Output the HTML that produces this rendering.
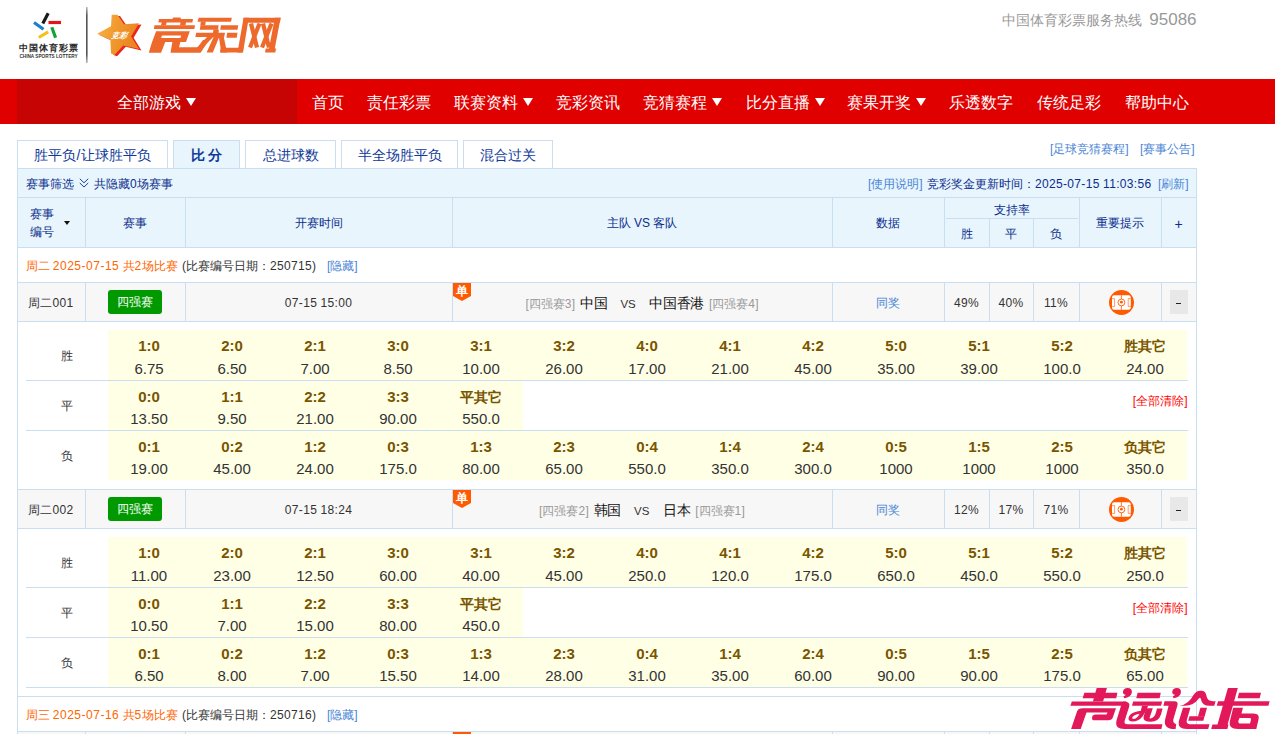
<!DOCTYPE html><html><head><meta charset="utf-8"><style>
html,body{margin:0;padding:0;} body{width:1275px;height:734px;overflow:hidden;position:relative;background:#fff;font-family:"Liberation Sans", sans-serif;color:#333;}
div{box-sizing:border-box;} body{font-weight:500}
</style></head><body>
<svg style="position:absolute;left:0;top:0" width="300" height="79" viewBox="0 0 300 79">
<defs><linearGradient id="sg" x1="0" y1="0" x2="1" y2="0.3"><stop offset="0" stop-color="#f7b64a"/><stop offset="0.5" stop-color="#f19a2e"/><stop offset="1" stop-color="#ec8422"/></linearGradient>
<linearGradient id="dv" x1="0" y1="0" x2="0" y2="1"><stop offset="0" stop-color="#bbb"/><stop offset="0.15" stop-color="#555"/><stop offset="0.85" stop-color="#555"/><stop offset="1" stop-color="#bbb"/></linearGradient></defs>
<g stroke-linecap="butt" stroke-width="3.2">
<line x1="42.8" y1="23.5" x2="48.2" y2="13.3" stroke="#1a1a1a"/>
<line x1="48.5" y1="22.5" x2="61" y2="22.5" stroke="#e3141b"/>
<line x1="34" y1="22.5" x2="43.5" y2="29.3" stroke="#1a7fd0"/>
<line x1="38.8" y1="37.5" x2="48.2" y2="31.8" stroke="#f4c21a"/>
<line x1="51.8" y1="27.3" x2="55.6" y2="37.8" stroke="#16a03c"/>
</g>
<rect x="86" y="7" width="1.6" height="56" fill="url(#dv)"/>
<polygon transform="translate(2.5,1.3)" points="111.7,14.8 117.5,14.8 124,24.3 139,23.3 131.1,36.5 139,49.1 123.3,45.4 114.5,54.9 111,53.6 110.4,40 97.1,33.8 111,26.3" fill="#e8261a"/>
<polygon points="111.7,14.8 117.5,14.8 124,24.3 139,23.3 131.1,36.5 139,49.1 123.3,45.4 114.5,54.9 111,53.6 110.4,40 97.1,33.8 111,26.3" fill="url(#sg)"/>
<text x="119.5" y="37.6" font-size="7.8" fill="#fff" font-style="italic" font-weight="bold" text-anchor="middle" transform="translate(119.5,35) skewX(-12) translate(-119.5,-35)">竞彩</text>
<g fill="#ee692c">
<polygon points="159,19 193,19 192.4,22.4 158.4,22.4"/>
<polygon points="173,17.6 180.5,17.6 181,19.2 172.5,19.2"/>
<polygon points="161.8,22 166.5,22 166,25.5 161,25.5"/>
<polygon points="180.6,22 186,22 185.5,25.5 180,25.5"/>
<polygon points="154.5,25.2 195,25.2 194.3,28.9 153.8,28.9"/>
<path fill-rule="evenodd" d="M156.1,31.3 L189.8,31.3 L186,42.1 L152.1,42.1 Z M162,35.5 L181.3,35.5 L180.4,38.1 L161.1,38.1 Z"/>
<polygon points="152.1,41.8 165.3,41.8 161.1,52.7 148.8,52.7"/>
<polygon points="172.4,41.8 180.4,41.8 179,47.3 198,47.3 203,40 209,40 200.6,52.7 170.5,52.7"/>
<polygon points="198.7,17.8 231.8,17.8 231,21.8 197.5,21.8"/>
<polygon points="200.8,21.5 205.7,21.5 205.2,25.5 200.3,25.5"/>
<polygon points="200.5,25.2 218.6,25.2 218,29.8 199.8,29.8"/>
<polygon points="220.9,25.2 238.2,25.2 237.6,29.8 220.2,29.8"/>
<polygon points="213.4,29.5 218.9,29.5 218.5,33 213,33"/>
<polygon points="196.2,32.8 225,32.8 224.2,37.1 195.4,37.1"/>
<polygon points="227.2,32.8 237.5,32.8 236.7,37.7 226.4,37.7"/>
<polygon points="213.6,37 219.2,37 212.8,52.4 206.6,52.4"/>
<polygon points="207,37 213.2,37 202.4,48 196.6,48"/>
<polygon points="218.9,37 223.8,37 227,52.4 221.3,52.4"/>
<polygon points="220.7,47.8 243.4,47.8 242.6,52.4 219.9,52.4"/>
<polygon points="243.6,17.8 280.6,17.8 280,22.7 243,22.7"/>
<polygon points="243.6,17.8 248.8,17.8 243,52.4 237.5,52.4"/>
<polygon points="274.8,17.8 280.6,17.8 274.8,48.4 276,48.4 275.3,52.4 265,52.4 265.7,48.4 269,48.4"/>
</g>
<g stroke="#ee692c" stroke-width="4.2" stroke-linecap="butt">
<line x1="251" y1="23.5" x2="257" y2="47.5"/>
<line x1="259.5" y1="23.5" x2="250" y2="47.5"/>
<line x1="263" y1="23.5" x2="269" y2="47.5"/>
<line x1="271.5" y1="23.5" x2="262" y2="47.5"/>
</g>
</svg>
<div style="position:absolute;left:17px;top:43px;width:62px;height:10px;line-height:10px;text-align:center;white-space:nowrap;font-size:9px;font-weight:bold;color:#2a2a2a;letter-spacing:1px;text-indent:1px;">中国体育彩票</div>
<div style="position:absolute;left:17.5px;top:54px;width:62px;height:6px;line-height:6px;text-align:center;white-space:nowrap;font-size:4.7px;font-weight:bold;color:#333;">CHINA SPORTS LOTTERY</div>
<div style="position:absolute;left:1001.5px;top:9px;height:22px;line-height:22px;white-space:nowrap;color:#999;font-size:14px">中国体育彩票服务热线&nbsp;&nbsp;<span style="font-size:17px">95086</span></div>
<div style="position:absolute;left:0px;top:79px;width:1275px;height:45px;background:#e00000"></div>
<div style="position:absolute;left:17px;top:79px;width:280px;height:45px;background:#c70404"></div>
<div style="position:absolute;left:117px;top:80px;width:70px;height:45px;line-height:45px;text-align:left;white-space:nowrap;color:#fff;font-size:16px;">全部游戏</div>
<div style="position:absolute;left:186px;top:98px;width:0;height:0;border-left:5.0px solid transparent;border-right:5.0px solid transparent;border-top:8px solid #fff"></div>
<div style="position:absolute;left:312px;top:80px;width:70px;height:45px;line-height:45px;text-align:left;white-space:nowrap;color:#fff;font-size:16px;">首页</div>
<div style="position:absolute;left:367px;top:80px;width:70px;height:45px;line-height:45px;text-align:left;white-space:nowrap;color:#fff;font-size:16px;">责任彩票</div>
<div style="position:absolute;left:454px;top:80px;width:70px;height:45px;line-height:45px;text-align:left;white-space:nowrap;color:#fff;font-size:16px;">联赛资料</div>
<div style="position:absolute;left:523px;top:98px;width:0;height:0;border-left:5.0px solid transparent;border-right:5.0px solid transparent;border-top:8px solid #fff"></div>
<div style="position:absolute;left:556px;top:80px;width:70px;height:45px;line-height:45px;text-align:left;white-space:nowrap;color:#fff;font-size:16px;">竞彩资讯</div>
<div style="position:absolute;left:643px;top:80px;width:70px;height:45px;line-height:45px;text-align:left;white-space:nowrap;color:#fff;font-size:16px;">竞猜赛程</div>
<div style="position:absolute;left:712px;top:98px;width:0;height:0;border-left:5.0px solid transparent;border-right:5.0px solid transparent;border-top:8px solid #fff"></div>
<div style="position:absolute;left:746px;top:80px;width:70px;height:45px;line-height:45px;text-align:left;white-space:nowrap;color:#fff;font-size:16px;">比分直播</div>
<div style="position:absolute;left:815px;top:98px;width:0;height:0;border-left:5.0px solid transparent;border-right:5.0px solid transparent;border-top:8px solid #fff"></div>
<div style="position:absolute;left:847px;top:80px;width:70px;height:45px;line-height:45px;text-align:left;white-space:nowrap;color:#fff;font-size:16px;">赛果开奖</div>
<div style="position:absolute;left:916px;top:98px;width:0;height:0;border-left:5.0px solid transparent;border-right:5.0px solid transparent;border-top:8px solid #fff"></div>
<div style="position:absolute;left:949px;top:80px;width:70px;height:45px;line-height:45px;text-align:left;white-space:nowrap;color:#fff;font-size:16px;">乐透数字</div>
<div style="position:absolute;left:1037px;top:80px;width:70px;height:45px;line-height:45px;text-align:left;white-space:nowrap;color:#fff;font-size:16px;">传统足彩</div>
<div style="position:absolute;left:1125px;top:80px;width:70px;height:45px;line-height:45px;text-align:left;white-space:nowrap;color:#fff;font-size:16px;">帮助中心</div>
<div style="position:absolute;left:17px;top:140px;width:151px;height:29px;border:1px solid #c9def0;background:#fff;text-align:center;line-height:28px;font-size:14px;color:#0f3a9a;">胜平负<span style="margin:0 0.8px">/</span>让球胜平负</div>
<div style="position:absolute;left:173px;top:140px;width:67px;height:29px;border:1px solid #c9def0;background:#e8f5fd;text-align:center;line-height:28px;font-size:14px;color:#0f3a9a;font-weight:bold;">比 分</div>
<div style="position:absolute;left:245px;top:140px;width:91px;height:29px;border:1px solid #c9def0;background:#fff;text-align:center;line-height:28px;font-size:14px;color:#0f3a9a;">总进球数</div>
<div style="position:absolute;left:341px;top:140px;width:117px;height:29px;border:1px solid #c9def0;background:#fff;text-align:center;line-height:28px;font-size:14px;color:#0f3a9a;">半全场胜平负</div>
<div style="position:absolute;left:463px;top:140px;width:90px;height:29px;border:1px solid #c9def0;background:#fff;text-align:center;line-height:28px;font-size:14px;color:#0f3a9a;">混合过关</div>
<div style="position:absolute;left:1050px;top:139px;width:90px;height:20px;line-height:20px;text-align:left;white-space:nowrap;font-size:12px;color:#4a85d6;">[足球竞猜赛程]</div>
<div style="position:absolute;left:1140px;top:139px;width:60px;height:20px;line-height:20px;text-align:left;white-space:nowrap;font-size:12px;color:#4a85d6;">[赛事公告]</div>
<div style="position:absolute;left:17px;top:168px;width:1180px;height:30px;border:1px solid #c9def0;background:#e8f5fd"></div>
<div style="position:absolute;left:26px;top:170px;width:60px;height:28px;line-height:28px;text-align:left;white-space:nowrap;font-size:12px;color:#0a2d8c;">赛事筛选</div>
<svg style="position:absolute;left:79px;top:178px" width="10" height="10" viewBox="0 0 10 10"><path d="M0.8 0.8 L5 4.8 L9.2 0.8 M0.8 5 L5 9 L9.2 5" fill="none" stroke="#0a2d8c" stroke-width="0.9"/></svg>
<div style="position:absolute;left:94px;top:170px;width:90px;height:28px;line-height:28px;text-align:left;white-space:nowrap;font-size:12px;color:#0a2d8c;">共隐藏<i style="font-style:normal;letter-spacing:0.33px">0</i>场赛事</div>
<div style="position:absolute;left:868px;top:170px;width:60px;height:28px;line-height:28px;text-align:left;white-space:nowrap;font-size:12px;color:#4a85d6;">[使用说明]</div>
<div style="position:absolute;left:927px;top:170px;width:120px;height:28px;line-height:28px;text-align:left;white-space:nowrap;font-size:12px;color:#0a2d8c;">竞彩奖金更新时间：</div>
<div style="position:absolute;left:1035px;top:170px;width:120px;height:28px;line-height:28px;text-align:left;white-space:nowrap;font-size:12px;color:#0a2d8c;"><i style="font-style:normal;letter-spacing:0.33px">2025-07-15</i> <i style="font-style:normal;letter-spacing:0.33px">11:03:56</i></div>
<div style="position:absolute;left:1158px;top:170px;width:40px;height:28px;line-height:28px;text-align:left;white-space:nowrap;font-size:12px;color:#4a85d6;">[刷新]</div>
<div style="position:absolute;left:17px;top:197px;width:1180px;height:51px;background:#e8f5fd;border:1px solid #c9def0"></div>
<div style="position:absolute;left:85px;top:197px;width:1px;height:51px;background:#c9def0"></div>
<div style="position:absolute;left:185px;top:197px;width:1px;height:51px;background:#c9def0"></div>
<div style="position:absolute;left:452px;top:197px;width:1px;height:51px;background:#c9def0"></div>
<div style="position:absolute;left:832px;top:197px;width:1px;height:51px;background:#c9def0"></div>
<div style="position:absolute;left:944px;top:197px;width:1px;height:51px;background:#c9def0"></div>
<div style="position:absolute;left:1079px;top:197px;width:1px;height:51px;background:#c9def0"></div>
<div style="position:absolute;left:1161px;top:197px;width:1px;height:51px;background:#c9def0"></div>
<div style="position:absolute;left:30px;top:206px;width:40px;height:17px;line-height:17px;text-align:left;white-space:nowrap;font-size:12px;color:#0a2d8c;">赛事</div>
<div style="position:absolute;left:30px;top:224px;width:40px;height:17px;line-height:17px;text-align:left;white-space:nowrap;font-size:12px;color:#0a2d8c;">编号</div>
<div style="position:absolute;left:64px;top:221px;width:0;height:0;border-left:3.0px solid transparent;border-right:3.0px solid transparent;border-top:4px solid #111"></div>
<div style="position:absolute;left:85px;top:199px;width:100px;height:49px;line-height:49px;text-align:center;white-space:nowrap;font-size:12px;color:#0a2d8c;">赛事</div>
<div style="position:absolute;left:185px;top:199px;width:267px;height:49px;line-height:49px;text-align:center;white-space:nowrap;font-size:12px;color:#0a2d8c;">开赛时间</div>
<div style="position:absolute;left:452px;top:199px;width:380px;height:49px;line-height:49px;text-align:center;white-space:nowrap;font-size:12px;color:#0a2d8c;">主队 VS 客队</div>
<div style="position:absolute;left:832px;top:199px;width:112px;height:49px;line-height:49px;text-align:center;white-space:nowrap;font-size:12px;color:#0a2d8c;">数据</div>
<div style="position:absolute;left:944px;top:199px;width:135px;height:22px;line-height:22px;text-align:center;white-space:nowrap;font-size:12px;color:#0a2d8c;">支持率</div>
<div style="position:absolute;left:946px;top:218px;width:132px;height:1px;background:#c9def0"></div>
<div style="position:absolute;left:989px;top:219px;width:1px;height:29px;background:#c9def0"></div>
<div style="position:absolute;left:1033px;top:219px;width:1px;height:29px;background:#c9def0"></div>
<div style="position:absolute;left:944px;top:220px;width:45px;height:28px;line-height:28px;text-align:center;white-space:nowrap;font-size:12px;color:#0a2d8c;">胜</div>
<div style="position:absolute;left:989px;top:220px;width:44px;height:28px;line-height:28px;text-align:center;white-space:nowrap;font-size:12px;color:#0a2d8c;">平</div>
<div style="position:absolute;left:1033px;top:220px;width:46px;height:28px;line-height:28px;text-align:center;white-space:nowrap;font-size:12px;color:#0a2d8c;">负</div>
<div style="position:absolute;left:1079px;top:199px;width:82px;height:49px;line-height:49px;text-align:center;white-space:nowrap;font-size:12px;color:#0a2d8c;">重要提示</div>
<div style="position:absolute;left:1161px;top:200px;width:35px;height:49px;line-height:49px;text-align:center;white-space:nowrap;font-size:12px;color:#0a2d8c;font-size:14px;">+</div>
<div style="position:absolute;left:17px;top:247px;width:1px;height:487px;background:#c9def0"></div>
<div style="position:absolute;left:1196px;top:247px;width:1px;height:487px;background:#c9def0"></div>
<div style="position:absolute;left:25.5px;top:249px;width:160px;height:34px;line-height:34px;text-align:left;white-space:nowrap;font-size:12px;color:#ff6600">周二 <i style="font-style:normal;letter-spacing:0.5px">2025-07-15</i> 共<i style="font-style:normal;letter-spacing:0.5px">2</i>场比赛</div>
<div style="position:absolute;left:182px;top:249px;width:140px;height:34px;line-height:34px;text-align:left;white-space:nowrap;font-size:12px;color:#333">(比赛编号日期：<i style="font-style:normal;letter-spacing:0.33px">250715</i>)</div>
<div style="position:absolute;left:327px;top:249px;width:40px;height:34px;line-height:34px;text-align:left;white-space:nowrap;font-size:12px;color:#4a85d6">[隐藏]</div>
<div style="position:absolute;left:17px;top:282px;width:1180px;height:1px;background:#c9def0"></div>
<div style="position:absolute;left:18px;top:283px;width:1178px;height:39px;background:#f7f7f7"></div>
<div style="position:absolute;left:85px;top:282px;width:1px;height:40px;background:#c9def0"></div>
<div style="position:absolute;left:185px;top:282px;width:1px;height:40px;background:#c9def0"></div>
<div style="position:absolute;left:452px;top:282px;width:1px;height:40px;background:#c9def0"></div>
<div style="position:absolute;left:832px;top:282px;width:1px;height:40px;background:#c9def0"></div>
<div style="position:absolute;left:944px;top:282px;width:1px;height:40px;background:#c9def0"></div>
<div style="position:absolute;left:1079px;top:282px;width:1px;height:40px;background:#c9def0"></div>
<div style="position:absolute;left:1161px;top:282px;width:1px;height:40px;background:#c9def0"></div>
<div style="position:absolute;left:989px;top:282px;width:1px;height:40px;background:#c9def0"></div>
<div style="position:absolute;left:1033px;top:282px;width:1px;height:40px;background:#c9def0"></div>
<div style="position:absolute;left:17px;top:321px;width:1180px;height:1px;background:#c9def0"></div>
<div style="position:absolute;left:17px;top:284px;width:68px;height:38px;line-height:38px;text-align:center;white-space:nowrap;font-size:12px;color:#333;">周二<i style="font-style:normal;letter-spacing:0.33px">001</i></div>
<div style="position:absolute;left:108px;top:290px;width:54px;height:24px;line-height:25px;background:#009a00;border-radius:3px;color:#fff;font-size:12px;text-align:center">四强赛</div>
<div style="position:absolute;left:185px;top:284px;width:267px;height:38px;line-height:38px;text-align:center;white-space:nowrap;font-size:12px;color:#333;"><i style="font-style:normal;letter-spacing:0.33px">07-15</i> <i style="font-style:normal;letter-spacing:0.33px">15:00</i></div>
<svg style="position:absolute;left:453px;top:283px" width="18" height="19" viewBox="0 0 18 19"><polygon points="0,0 18,0 18,13 9,18 0,13" fill="#ff5a00"/><text x="9" y="12" font-size="11.5" font-weight="bold" fill="#fff" text-anchor="middle">单</text></svg>
<div style="position:absolute;left:452px;top:284px;width:380px;height:38px;line-height:38px;text-align:center;white-space:nowrap"><span style="color:#999;font-size:12px">[四强赛<i style="font-style:normal;letter-spacing:0.33px">3</i>]</span><span style="color:#111;font-size:14px;letter-spacing:-0.35px;margin-left:5px">中国</span><span style="color:#333;font-size:11.5px;margin-left:13px">VS</span><span style="color:#111;font-size:14px;letter-spacing:-0.35px;margin-left:13.5px">中国香港</span><span style="color:#999;font-size:12px;margin-left:5px">[四强赛<i style="font-style:normal;letter-spacing:0.33px">4</i>]</span></div>
<div style="position:absolute;left:832px;top:284px;width:112px;height:38px;line-height:38px;text-align:center;white-space:nowrap;font-size:12px;color:#4a85d6;">同奖</div>
<div style="position:absolute;left:944px;top:284px;width:45px;height:38px;line-height:38px;text-align:center;white-space:nowrap;font-size:12px;color:#333;"><i style="font-style:normal;letter-spacing:0.33px">49%</i></div>
<div style="position:absolute;left:989px;top:284px;width:44px;height:38px;line-height:38px;text-align:center;white-space:nowrap;font-size:12px;color:#333;"><i style="font-style:normal;letter-spacing:0.33px">40%</i></div>
<div style="position:absolute;left:1033px;top:284px;width:46px;height:38px;line-height:38px;text-align:center;white-space:nowrap;font-size:12px;color:#333;"><i style="font-style:normal;letter-spacing:0.33px">11%</i></div>
<svg style="position:absolute;left:1109px;top:290px" width="25" height="25" viewBox="0 0 25 25">
<circle cx="12.5" cy="12.5" r="12.5" fill="#ff5a00"/>
<rect x="3" y="5.2" width="18.8" height="14.5" rx="2.2" fill="#fff"/>
<line x1="12.4" y1="5.2" x2="12.4" y2="19.7" stroke="#ff5a00" stroke-width="0.8"/>
<circle cx="12.4" cy="12.45" r="3.4" fill="#fff" stroke="#ff5a00" stroke-width="0.9"/>
<circle cx="12.4" cy="12.2" r="1.4" fill="#ff5a00"/>
<path d="M3,8.6 H5.6 V16.4 H3 M21.8,8.6 H19.2 V16.4 H21.8" fill="none" stroke="#ff5a00" stroke-width="0.6"/>
</svg>
<div style="position:absolute;left:1170px;top:290px;width:18px;height:24px;background:#e8e8e8;"></div>
<div style="position:absolute;left:1176px;top:303px;width:5px;height:1px;background:#222"></div>
<div style="position:absolute;left:108px;top:330px;width:1079px;height:50px;background:#ffffe6"></div>
<div style="position:absolute;left:26px;top:331px;width:82px;height:50px;line-height:50px;text-align:center;white-space:nowrap;font-size:12px;color:#333;">胜</div>
<div style="position:absolute;left:107.5px;top:336px;width:83px;height:20px;line-height:20px;text-align:center;white-space:nowrap;font-size:15px;font-weight:bold;color:#7a5500;">1:0</div>
<div style="position:absolute;left:107.5px;top:358px;width:83px;height:21px;line-height:21px;text-align:center;white-space:nowrap;font-size:15px;color:#333;">6.75</div>
<div style="position:absolute;left:190.5px;top:336px;width:83px;height:20px;line-height:20px;text-align:center;white-space:nowrap;font-size:15px;font-weight:bold;color:#7a5500;">2:0</div>
<div style="position:absolute;left:190.5px;top:358px;width:83px;height:21px;line-height:21px;text-align:center;white-space:nowrap;font-size:15px;color:#333;">6.50</div>
<div style="position:absolute;left:273.5px;top:336px;width:83px;height:20px;line-height:20px;text-align:center;white-space:nowrap;font-size:15px;font-weight:bold;color:#7a5500;">2:1</div>
<div style="position:absolute;left:273.5px;top:358px;width:83px;height:21px;line-height:21px;text-align:center;white-space:nowrap;font-size:15px;color:#333;">7.00</div>
<div style="position:absolute;left:356.5px;top:336px;width:83px;height:20px;line-height:20px;text-align:center;white-space:nowrap;font-size:15px;font-weight:bold;color:#7a5500;">3:0</div>
<div style="position:absolute;left:356.5px;top:358px;width:83px;height:21px;line-height:21px;text-align:center;white-space:nowrap;font-size:15px;color:#333;">8.50</div>
<div style="position:absolute;left:439.5px;top:336px;width:83px;height:20px;line-height:20px;text-align:center;white-space:nowrap;font-size:15px;font-weight:bold;color:#7a5500;">3:1</div>
<div style="position:absolute;left:439.5px;top:358px;width:83px;height:21px;line-height:21px;text-align:center;white-space:nowrap;font-size:15px;color:#333;">10.00</div>
<div style="position:absolute;left:522.5px;top:336px;width:83px;height:20px;line-height:20px;text-align:center;white-space:nowrap;font-size:15px;font-weight:bold;color:#7a5500;">3:2</div>
<div style="position:absolute;left:522.5px;top:358px;width:83px;height:21px;line-height:21px;text-align:center;white-space:nowrap;font-size:15px;color:#333;">26.00</div>
<div style="position:absolute;left:605.5px;top:336px;width:83px;height:20px;line-height:20px;text-align:center;white-space:nowrap;font-size:15px;font-weight:bold;color:#7a5500;">4:0</div>
<div style="position:absolute;left:605.5px;top:358px;width:83px;height:21px;line-height:21px;text-align:center;white-space:nowrap;font-size:15px;color:#333;">17.00</div>
<div style="position:absolute;left:688.5px;top:336px;width:83px;height:20px;line-height:20px;text-align:center;white-space:nowrap;font-size:15px;font-weight:bold;color:#7a5500;">4:1</div>
<div style="position:absolute;left:688.5px;top:358px;width:83px;height:21px;line-height:21px;text-align:center;white-space:nowrap;font-size:15px;color:#333;">21.00</div>
<div style="position:absolute;left:771.5px;top:336px;width:83px;height:20px;line-height:20px;text-align:center;white-space:nowrap;font-size:15px;font-weight:bold;color:#7a5500;">4:2</div>
<div style="position:absolute;left:771.5px;top:358px;width:83px;height:21px;line-height:21px;text-align:center;white-space:nowrap;font-size:15px;color:#333;">45.00</div>
<div style="position:absolute;left:854.5px;top:336px;width:83px;height:20px;line-height:20px;text-align:center;white-space:nowrap;font-size:15px;font-weight:bold;color:#7a5500;">5:0</div>
<div style="position:absolute;left:854.5px;top:358px;width:83px;height:21px;line-height:21px;text-align:center;white-space:nowrap;font-size:15px;color:#333;">35.00</div>
<div style="position:absolute;left:937.5px;top:336px;width:83px;height:20px;line-height:20px;text-align:center;white-space:nowrap;font-size:15px;font-weight:bold;color:#7a5500;">5:1</div>
<div style="position:absolute;left:937.5px;top:358px;width:83px;height:21px;line-height:21px;text-align:center;white-space:nowrap;font-size:15px;color:#333;">39.00</div>
<div style="position:absolute;left:1020.5px;top:336px;width:83px;height:20px;line-height:20px;text-align:center;white-space:nowrap;font-size:15px;font-weight:bold;color:#7a5500;">5:2</div>
<div style="position:absolute;left:1020.5px;top:358px;width:83px;height:21px;line-height:21px;text-align:center;white-space:nowrap;font-size:15px;color:#333;">100.0</div>
<div style="position:absolute;left:1103.5px;top:336px;width:83px;height:20px;line-height:20px;text-align:center;white-space:nowrap;font-size:14px;font-weight:bold;color:#7a5500;">胜其它</div>
<div style="position:absolute;left:1103.5px;top:358px;width:83px;height:21px;line-height:21px;text-align:center;white-space:nowrap;font-size:15px;color:#333;">24.00</div>
<div style="position:absolute;left:26px;top:380px;width:1162px;height:1px;background:#c9def0"></div>
<div style="position:absolute;left:108px;top:381px;width:415px;height:49px;background:#ffffe6"></div>
<div style="position:absolute;left:26px;top:382px;width:82px;height:49px;line-height:49px;text-align:center;white-space:nowrap;font-size:12px;color:#333;">平</div>
<div style="position:absolute;left:107.5px;top:387px;width:83px;height:20px;line-height:20px;text-align:center;white-space:nowrap;font-size:15px;font-weight:bold;color:#7a5500;">0:0</div>
<div style="position:absolute;left:107.5px;top:408px;width:83px;height:21px;line-height:21px;text-align:center;white-space:nowrap;font-size:15px;color:#333;">13.50</div>
<div style="position:absolute;left:190.5px;top:387px;width:83px;height:20px;line-height:20px;text-align:center;white-space:nowrap;font-size:15px;font-weight:bold;color:#7a5500;">1:1</div>
<div style="position:absolute;left:190.5px;top:408px;width:83px;height:21px;line-height:21px;text-align:center;white-space:nowrap;font-size:15px;color:#333;">9.50</div>
<div style="position:absolute;left:273.5px;top:387px;width:83px;height:20px;line-height:20px;text-align:center;white-space:nowrap;font-size:15px;font-weight:bold;color:#7a5500;">2:2</div>
<div style="position:absolute;left:273.5px;top:408px;width:83px;height:21px;line-height:21px;text-align:center;white-space:nowrap;font-size:15px;color:#333;">21.00</div>
<div style="position:absolute;left:356.5px;top:387px;width:83px;height:20px;line-height:20px;text-align:center;white-space:nowrap;font-size:15px;font-weight:bold;color:#7a5500;">3:3</div>
<div style="position:absolute;left:356.5px;top:408px;width:83px;height:21px;line-height:21px;text-align:center;white-space:nowrap;font-size:15px;color:#333;">90.00</div>
<div style="position:absolute;left:439.5px;top:387px;width:83px;height:20px;line-height:20px;text-align:center;white-space:nowrap;font-size:14px;font-weight:bold;color:#7a5500;">平其它</div>
<div style="position:absolute;left:439.5px;top:408px;width:83px;height:21px;line-height:21px;text-align:center;white-space:nowrap;font-size:15px;color:#333;">550.0</div>
<div style="position:absolute;left:999.5px;top:377px;width:188px;height:49px;line-height:49px;text-align:right;white-space:nowrap;font-size:12px;color:#f00;">[全部清除]</div>
<div style="position:absolute;left:26px;top:430px;width:1162px;height:1px;background:#c9def0"></div>
<div style="position:absolute;left:108px;top:431px;width:1079px;height:49px;background:#ffffe6"></div>
<div style="position:absolute;left:26px;top:432px;width:82px;height:49px;line-height:49px;text-align:center;white-space:nowrap;font-size:12px;color:#333;">负</div>
<div style="position:absolute;left:107.5px;top:437px;width:83px;height:20px;line-height:20px;text-align:center;white-space:nowrap;font-size:15px;font-weight:bold;color:#7a5500;">0:1</div>
<div style="position:absolute;left:107.5px;top:458px;width:83px;height:21px;line-height:21px;text-align:center;white-space:nowrap;font-size:15px;color:#333;">19.00</div>
<div style="position:absolute;left:190.5px;top:437px;width:83px;height:20px;line-height:20px;text-align:center;white-space:nowrap;font-size:15px;font-weight:bold;color:#7a5500;">0:2</div>
<div style="position:absolute;left:190.5px;top:458px;width:83px;height:21px;line-height:21px;text-align:center;white-space:nowrap;font-size:15px;color:#333;">45.00</div>
<div style="position:absolute;left:273.5px;top:437px;width:83px;height:20px;line-height:20px;text-align:center;white-space:nowrap;font-size:15px;font-weight:bold;color:#7a5500;">1:2</div>
<div style="position:absolute;left:273.5px;top:458px;width:83px;height:21px;line-height:21px;text-align:center;white-space:nowrap;font-size:15px;color:#333;">24.00</div>
<div style="position:absolute;left:356.5px;top:437px;width:83px;height:20px;line-height:20px;text-align:center;white-space:nowrap;font-size:15px;font-weight:bold;color:#7a5500;">0:3</div>
<div style="position:absolute;left:356.5px;top:458px;width:83px;height:21px;line-height:21px;text-align:center;white-space:nowrap;font-size:15px;color:#333;">175.0</div>
<div style="position:absolute;left:439.5px;top:437px;width:83px;height:20px;line-height:20px;text-align:center;white-space:nowrap;font-size:15px;font-weight:bold;color:#7a5500;">1:3</div>
<div style="position:absolute;left:439.5px;top:458px;width:83px;height:21px;line-height:21px;text-align:center;white-space:nowrap;font-size:15px;color:#333;">80.00</div>
<div style="position:absolute;left:522.5px;top:437px;width:83px;height:20px;line-height:20px;text-align:center;white-space:nowrap;font-size:15px;font-weight:bold;color:#7a5500;">2:3</div>
<div style="position:absolute;left:522.5px;top:458px;width:83px;height:21px;line-height:21px;text-align:center;white-space:nowrap;font-size:15px;color:#333;">65.00</div>
<div style="position:absolute;left:605.5px;top:437px;width:83px;height:20px;line-height:20px;text-align:center;white-space:nowrap;font-size:15px;font-weight:bold;color:#7a5500;">0:4</div>
<div style="position:absolute;left:605.5px;top:458px;width:83px;height:21px;line-height:21px;text-align:center;white-space:nowrap;font-size:15px;color:#333;">550.0</div>
<div style="position:absolute;left:688.5px;top:437px;width:83px;height:20px;line-height:20px;text-align:center;white-space:nowrap;font-size:15px;font-weight:bold;color:#7a5500;">1:4</div>
<div style="position:absolute;left:688.5px;top:458px;width:83px;height:21px;line-height:21px;text-align:center;white-space:nowrap;font-size:15px;color:#333;">350.0</div>
<div style="position:absolute;left:771.5px;top:437px;width:83px;height:20px;line-height:20px;text-align:center;white-space:nowrap;font-size:15px;font-weight:bold;color:#7a5500;">2:4</div>
<div style="position:absolute;left:771.5px;top:458px;width:83px;height:21px;line-height:21px;text-align:center;white-space:nowrap;font-size:15px;color:#333;">300.0</div>
<div style="position:absolute;left:854.5px;top:437px;width:83px;height:20px;line-height:20px;text-align:center;white-space:nowrap;font-size:15px;font-weight:bold;color:#7a5500;">0:5</div>
<div style="position:absolute;left:854.5px;top:458px;width:83px;height:21px;line-height:21px;text-align:center;white-space:nowrap;font-size:15px;color:#333;">1000</div>
<div style="position:absolute;left:937.5px;top:437px;width:83px;height:20px;line-height:20px;text-align:center;white-space:nowrap;font-size:15px;font-weight:bold;color:#7a5500;">1:5</div>
<div style="position:absolute;left:937.5px;top:458px;width:83px;height:21px;line-height:21px;text-align:center;white-space:nowrap;font-size:15px;color:#333;">1000</div>
<div style="position:absolute;left:1020.5px;top:437px;width:83px;height:20px;line-height:20px;text-align:center;white-space:nowrap;font-size:15px;font-weight:bold;color:#7a5500;">2:5</div>
<div style="position:absolute;left:1020.5px;top:458px;width:83px;height:21px;line-height:21px;text-align:center;white-space:nowrap;font-size:15px;color:#333;">1000</div>
<div style="position:absolute;left:1103.5px;top:437px;width:83px;height:20px;line-height:20px;text-align:center;white-space:nowrap;font-size:14px;font-weight:bold;color:#7a5500;">负其它</div>
<div style="position:absolute;left:1103.5px;top:458px;width:83px;height:21px;line-height:21px;text-align:center;white-space:nowrap;font-size:15px;color:#333;">350.0</div>
<div style="position:absolute;left:17px;top:489px;width:1180px;height:1px;background:#c9def0"></div>
<div style="position:absolute;left:18px;top:490px;width:1178px;height:39px;background:#f7f7f7"></div>
<div style="position:absolute;left:85px;top:489px;width:1px;height:40px;background:#c9def0"></div>
<div style="position:absolute;left:185px;top:489px;width:1px;height:40px;background:#c9def0"></div>
<div style="position:absolute;left:452px;top:489px;width:1px;height:40px;background:#c9def0"></div>
<div style="position:absolute;left:832px;top:489px;width:1px;height:40px;background:#c9def0"></div>
<div style="position:absolute;left:944px;top:489px;width:1px;height:40px;background:#c9def0"></div>
<div style="position:absolute;left:1079px;top:489px;width:1px;height:40px;background:#c9def0"></div>
<div style="position:absolute;left:1161px;top:489px;width:1px;height:40px;background:#c9def0"></div>
<div style="position:absolute;left:989px;top:489px;width:1px;height:40px;background:#c9def0"></div>
<div style="position:absolute;left:1033px;top:489px;width:1px;height:40px;background:#c9def0"></div>
<div style="position:absolute;left:17px;top:528px;width:1180px;height:1px;background:#c9def0"></div>
<div style="position:absolute;left:17px;top:491px;width:68px;height:38px;line-height:38px;text-align:center;white-space:nowrap;font-size:12px;color:#333;">周二<i style="font-style:normal;letter-spacing:0.33px">002</i></div>
<div style="position:absolute;left:108px;top:497px;width:54px;height:24px;line-height:25px;background:#009a00;border-radius:3px;color:#fff;font-size:12px;text-align:center">四强赛</div>
<div style="position:absolute;left:185px;top:491px;width:267px;height:38px;line-height:38px;text-align:center;white-space:nowrap;font-size:12px;color:#333;"><i style="font-style:normal;letter-spacing:0.33px">07-15</i> <i style="font-style:normal;letter-spacing:0.33px">18:24</i></div>
<svg style="position:absolute;left:453px;top:490px" width="18" height="19" viewBox="0 0 18 19"><polygon points="0,0 18,0 18,13 9,18 0,13" fill="#ff5a00"/><text x="9" y="12" font-size="11.5" font-weight="bold" fill="#fff" text-anchor="middle">单</text></svg>
<div style="position:absolute;left:452px;top:491px;width:380px;height:38px;line-height:38px;text-align:center;white-space:nowrap"><span style="color:#999;font-size:12px">[四强赛<i style="font-style:normal;letter-spacing:0.33px">2</i>]</span><span style="color:#111;font-size:14px;letter-spacing:-0.35px;margin-left:5px">韩国</span><span style="color:#333;font-size:11.5px;margin-left:13px">VS</span><span style="color:#111;font-size:14px;letter-spacing:-0.35px;margin-left:13.5px">日本</span><span style="color:#999;font-size:12px;margin-left:5px">[四强赛<i style="font-style:normal;letter-spacing:0.33px">1</i>]</span></div>
<div style="position:absolute;left:832px;top:491px;width:112px;height:38px;line-height:38px;text-align:center;white-space:nowrap;font-size:12px;color:#4a85d6;">同奖</div>
<div style="position:absolute;left:944px;top:491px;width:45px;height:38px;line-height:38px;text-align:center;white-space:nowrap;font-size:12px;color:#333;"><i style="font-style:normal;letter-spacing:0.33px">12%</i></div>
<div style="position:absolute;left:989px;top:491px;width:44px;height:38px;line-height:38px;text-align:center;white-space:nowrap;font-size:12px;color:#333;"><i style="font-style:normal;letter-spacing:0.33px">17%</i></div>
<div style="position:absolute;left:1033px;top:491px;width:46px;height:38px;line-height:38px;text-align:center;white-space:nowrap;font-size:12px;color:#333;"><i style="font-style:normal;letter-spacing:0.33px">71%</i></div>
<svg style="position:absolute;left:1109px;top:497px" width="25" height="25" viewBox="0 0 25 25">
<circle cx="12.5" cy="12.5" r="12.5" fill="#ff5a00"/>
<rect x="3" y="5.2" width="18.8" height="14.5" rx="2.2" fill="#fff"/>
<line x1="12.4" y1="5.2" x2="12.4" y2="19.7" stroke="#ff5a00" stroke-width="0.8"/>
<circle cx="12.4" cy="12.45" r="3.4" fill="#fff" stroke="#ff5a00" stroke-width="0.9"/>
<circle cx="12.4" cy="12.2" r="1.4" fill="#ff5a00"/>
<path d="M3,8.6 H5.6 V16.4 H3 M21.8,8.6 H19.2 V16.4 H21.8" fill="none" stroke="#ff5a00" stroke-width="0.6"/>
</svg>
<div style="position:absolute;left:1170px;top:497px;width:18px;height:24px;background:#e8e8e8;"></div>
<div style="position:absolute;left:1176px;top:510px;width:5px;height:1px;background:#222"></div>
<div style="position:absolute;left:108px;top:537px;width:1079px;height:50px;background:#ffffe6"></div>
<div style="position:absolute;left:26px;top:538px;width:82px;height:50px;line-height:50px;text-align:center;white-space:nowrap;font-size:12px;color:#333;">胜</div>
<div style="position:absolute;left:107.5px;top:543px;width:83px;height:20px;line-height:20px;text-align:center;white-space:nowrap;font-size:15px;font-weight:bold;color:#7a5500;">1:0</div>
<div style="position:absolute;left:107.5px;top:565px;width:83px;height:21px;line-height:21px;text-align:center;white-space:nowrap;font-size:15px;color:#333;">11.00</div>
<div style="position:absolute;left:190.5px;top:543px;width:83px;height:20px;line-height:20px;text-align:center;white-space:nowrap;font-size:15px;font-weight:bold;color:#7a5500;">2:0</div>
<div style="position:absolute;left:190.5px;top:565px;width:83px;height:21px;line-height:21px;text-align:center;white-space:nowrap;font-size:15px;color:#333;">23.00</div>
<div style="position:absolute;left:273.5px;top:543px;width:83px;height:20px;line-height:20px;text-align:center;white-space:nowrap;font-size:15px;font-weight:bold;color:#7a5500;">2:1</div>
<div style="position:absolute;left:273.5px;top:565px;width:83px;height:21px;line-height:21px;text-align:center;white-space:nowrap;font-size:15px;color:#333;">12.50</div>
<div style="position:absolute;left:356.5px;top:543px;width:83px;height:20px;line-height:20px;text-align:center;white-space:nowrap;font-size:15px;font-weight:bold;color:#7a5500;">3:0</div>
<div style="position:absolute;left:356.5px;top:565px;width:83px;height:21px;line-height:21px;text-align:center;white-space:nowrap;font-size:15px;color:#333;">60.00</div>
<div style="position:absolute;left:439.5px;top:543px;width:83px;height:20px;line-height:20px;text-align:center;white-space:nowrap;font-size:15px;font-weight:bold;color:#7a5500;">3:1</div>
<div style="position:absolute;left:439.5px;top:565px;width:83px;height:21px;line-height:21px;text-align:center;white-space:nowrap;font-size:15px;color:#333;">40.00</div>
<div style="position:absolute;left:522.5px;top:543px;width:83px;height:20px;line-height:20px;text-align:center;white-space:nowrap;font-size:15px;font-weight:bold;color:#7a5500;">3:2</div>
<div style="position:absolute;left:522.5px;top:565px;width:83px;height:21px;line-height:21px;text-align:center;white-space:nowrap;font-size:15px;color:#333;">45.00</div>
<div style="position:absolute;left:605.5px;top:543px;width:83px;height:20px;line-height:20px;text-align:center;white-space:nowrap;font-size:15px;font-weight:bold;color:#7a5500;">4:0</div>
<div style="position:absolute;left:605.5px;top:565px;width:83px;height:21px;line-height:21px;text-align:center;white-space:nowrap;font-size:15px;color:#333;">250.0</div>
<div style="position:absolute;left:688.5px;top:543px;width:83px;height:20px;line-height:20px;text-align:center;white-space:nowrap;font-size:15px;font-weight:bold;color:#7a5500;">4:1</div>
<div style="position:absolute;left:688.5px;top:565px;width:83px;height:21px;line-height:21px;text-align:center;white-space:nowrap;font-size:15px;color:#333;">120.0</div>
<div style="position:absolute;left:771.5px;top:543px;width:83px;height:20px;line-height:20px;text-align:center;white-space:nowrap;font-size:15px;font-weight:bold;color:#7a5500;">4:2</div>
<div style="position:absolute;left:771.5px;top:565px;width:83px;height:21px;line-height:21px;text-align:center;white-space:nowrap;font-size:15px;color:#333;">175.0</div>
<div style="position:absolute;left:854.5px;top:543px;width:83px;height:20px;line-height:20px;text-align:center;white-space:nowrap;font-size:15px;font-weight:bold;color:#7a5500;">5:0</div>
<div style="position:absolute;left:854.5px;top:565px;width:83px;height:21px;line-height:21px;text-align:center;white-space:nowrap;font-size:15px;color:#333;">650.0</div>
<div style="position:absolute;left:937.5px;top:543px;width:83px;height:20px;line-height:20px;text-align:center;white-space:nowrap;font-size:15px;font-weight:bold;color:#7a5500;">5:1</div>
<div style="position:absolute;left:937.5px;top:565px;width:83px;height:21px;line-height:21px;text-align:center;white-space:nowrap;font-size:15px;color:#333;">450.0</div>
<div style="position:absolute;left:1020.5px;top:543px;width:83px;height:20px;line-height:20px;text-align:center;white-space:nowrap;font-size:15px;font-weight:bold;color:#7a5500;">5:2</div>
<div style="position:absolute;left:1020.5px;top:565px;width:83px;height:21px;line-height:21px;text-align:center;white-space:nowrap;font-size:15px;color:#333;">550.0</div>
<div style="position:absolute;left:1103.5px;top:543px;width:83px;height:20px;line-height:20px;text-align:center;white-space:nowrap;font-size:14px;font-weight:bold;color:#7a5500;">胜其它</div>
<div style="position:absolute;left:1103.5px;top:565px;width:83px;height:21px;line-height:21px;text-align:center;white-space:nowrap;font-size:15px;color:#333;">250.0</div>
<div style="position:absolute;left:26px;top:587px;width:1162px;height:1px;background:#c9def0"></div>
<div style="position:absolute;left:108px;top:588px;width:415px;height:49px;background:#ffffe6"></div>
<div style="position:absolute;left:26px;top:589px;width:82px;height:49px;line-height:49px;text-align:center;white-space:nowrap;font-size:12px;color:#333;">平</div>
<div style="position:absolute;left:107.5px;top:594px;width:83px;height:20px;line-height:20px;text-align:center;white-space:nowrap;font-size:15px;font-weight:bold;color:#7a5500;">0:0</div>
<div style="position:absolute;left:107.5px;top:615px;width:83px;height:21px;line-height:21px;text-align:center;white-space:nowrap;font-size:15px;color:#333;">10.50</div>
<div style="position:absolute;left:190.5px;top:594px;width:83px;height:20px;line-height:20px;text-align:center;white-space:nowrap;font-size:15px;font-weight:bold;color:#7a5500;">1:1</div>
<div style="position:absolute;left:190.5px;top:615px;width:83px;height:21px;line-height:21px;text-align:center;white-space:nowrap;font-size:15px;color:#333;">7.00</div>
<div style="position:absolute;left:273.5px;top:594px;width:83px;height:20px;line-height:20px;text-align:center;white-space:nowrap;font-size:15px;font-weight:bold;color:#7a5500;">2:2</div>
<div style="position:absolute;left:273.5px;top:615px;width:83px;height:21px;line-height:21px;text-align:center;white-space:nowrap;font-size:15px;color:#333;">15.00</div>
<div style="position:absolute;left:356.5px;top:594px;width:83px;height:20px;line-height:20px;text-align:center;white-space:nowrap;font-size:15px;font-weight:bold;color:#7a5500;">3:3</div>
<div style="position:absolute;left:356.5px;top:615px;width:83px;height:21px;line-height:21px;text-align:center;white-space:nowrap;font-size:15px;color:#333;">80.00</div>
<div style="position:absolute;left:439.5px;top:594px;width:83px;height:20px;line-height:20px;text-align:center;white-space:nowrap;font-size:14px;font-weight:bold;color:#7a5500;">平其它</div>
<div style="position:absolute;left:439.5px;top:615px;width:83px;height:21px;line-height:21px;text-align:center;white-space:nowrap;font-size:15px;color:#333;">450.0</div>
<div style="position:absolute;left:999.5px;top:584px;width:188px;height:49px;line-height:49px;text-align:right;white-space:nowrap;font-size:12px;color:#f00;">[全部清除]</div>
<div style="position:absolute;left:26px;top:637px;width:1162px;height:1px;background:#c9def0"></div>
<div style="position:absolute;left:108px;top:638px;width:1079px;height:49px;background:#ffffe6"></div>
<div style="position:absolute;left:26px;top:639px;width:82px;height:49px;line-height:49px;text-align:center;white-space:nowrap;font-size:12px;color:#333;">负</div>
<div style="position:absolute;left:107.5px;top:644px;width:83px;height:20px;line-height:20px;text-align:center;white-space:nowrap;font-size:15px;font-weight:bold;color:#7a5500;">0:1</div>
<div style="position:absolute;left:107.5px;top:665px;width:83px;height:21px;line-height:21px;text-align:center;white-space:nowrap;font-size:15px;color:#333;">6.50</div>
<div style="position:absolute;left:190.5px;top:644px;width:83px;height:20px;line-height:20px;text-align:center;white-space:nowrap;font-size:15px;font-weight:bold;color:#7a5500;">0:2</div>
<div style="position:absolute;left:190.5px;top:665px;width:83px;height:21px;line-height:21px;text-align:center;white-space:nowrap;font-size:15px;color:#333;">8.00</div>
<div style="position:absolute;left:273.5px;top:644px;width:83px;height:20px;line-height:20px;text-align:center;white-space:nowrap;font-size:15px;font-weight:bold;color:#7a5500;">1:2</div>
<div style="position:absolute;left:273.5px;top:665px;width:83px;height:21px;line-height:21px;text-align:center;white-space:nowrap;font-size:15px;color:#333;">7.00</div>
<div style="position:absolute;left:356.5px;top:644px;width:83px;height:20px;line-height:20px;text-align:center;white-space:nowrap;font-size:15px;font-weight:bold;color:#7a5500;">0:3</div>
<div style="position:absolute;left:356.5px;top:665px;width:83px;height:21px;line-height:21px;text-align:center;white-space:nowrap;font-size:15px;color:#333;">15.50</div>
<div style="position:absolute;left:439.5px;top:644px;width:83px;height:20px;line-height:20px;text-align:center;white-space:nowrap;font-size:15px;font-weight:bold;color:#7a5500;">1:3</div>
<div style="position:absolute;left:439.5px;top:665px;width:83px;height:21px;line-height:21px;text-align:center;white-space:nowrap;font-size:15px;color:#333;">14.00</div>
<div style="position:absolute;left:522.5px;top:644px;width:83px;height:20px;line-height:20px;text-align:center;white-space:nowrap;font-size:15px;font-weight:bold;color:#7a5500;">2:3</div>
<div style="position:absolute;left:522.5px;top:665px;width:83px;height:21px;line-height:21px;text-align:center;white-space:nowrap;font-size:15px;color:#333;">28.00</div>
<div style="position:absolute;left:605.5px;top:644px;width:83px;height:20px;line-height:20px;text-align:center;white-space:nowrap;font-size:15px;font-weight:bold;color:#7a5500;">0:4</div>
<div style="position:absolute;left:605.5px;top:665px;width:83px;height:21px;line-height:21px;text-align:center;white-space:nowrap;font-size:15px;color:#333;">31.00</div>
<div style="position:absolute;left:688.5px;top:644px;width:83px;height:20px;line-height:20px;text-align:center;white-space:nowrap;font-size:15px;font-weight:bold;color:#7a5500;">1:4</div>
<div style="position:absolute;left:688.5px;top:665px;width:83px;height:21px;line-height:21px;text-align:center;white-space:nowrap;font-size:15px;color:#333;">35.00</div>
<div style="position:absolute;left:771.5px;top:644px;width:83px;height:20px;line-height:20px;text-align:center;white-space:nowrap;font-size:15px;font-weight:bold;color:#7a5500;">2:4</div>
<div style="position:absolute;left:771.5px;top:665px;width:83px;height:21px;line-height:21px;text-align:center;white-space:nowrap;font-size:15px;color:#333;">60.00</div>
<div style="position:absolute;left:854.5px;top:644px;width:83px;height:20px;line-height:20px;text-align:center;white-space:nowrap;font-size:15px;font-weight:bold;color:#7a5500;">0:5</div>
<div style="position:absolute;left:854.5px;top:665px;width:83px;height:21px;line-height:21px;text-align:center;white-space:nowrap;font-size:15px;color:#333;">90.00</div>
<div style="position:absolute;left:937.5px;top:644px;width:83px;height:20px;line-height:20px;text-align:center;white-space:nowrap;font-size:15px;font-weight:bold;color:#7a5500;">1:5</div>
<div style="position:absolute;left:937.5px;top:665px;width:83px;height:21px;line-height:21px;text-align:center;white-space:nowrap;font-size:15px;color:#333;">90.00</div>
<div style="position:absolute;left:1020.5px;top:644px;width:83px;height:20px;line-height:20px;text-align:center;white-space:nowrap;font-size:15px;font-weight:bold;color:#7a5500;">2:5</div>
<div style="position:absolute;left:1020.5px;top:665px;width:83px;height:21px;line-height:21px;text-align:center;white-space:nowrap;font-size:15px;color:#333;">175.0</div>
<div style="position:absolute;left:1103.5px;top:644px;width:83px;height:20px;line-height:20px;text-align:center;white-space:nowrap;font-size:14px;font-weight:bold;color:#7a5500;">负其它</div>
<div style="position:absolute;left:1103.5px;top:665px;width:83px;height:21px;line-height:21px;text-align:center;white-space:nowrap;font-size:15px;color:#333;">65.00</div>
<div style="position:absolute;left:26px;top:687px;width:1162px;height:1px;background:#c9def0"></div>
<div style="position:absolute;left:17px;top:696px;width:1180px;height:1px;background:#c9def0"></div>
<div style="position:absolute;left:25.5px;top:698px;width:160px;height:34px;line-height:34px;text-align:left;white-space:nowrap;font-size:12px;color:#ff6600">周三 <i style="font-style:normal;letter-spacing:0.5px">2025-07-16</i> 共<i style="font-style:normal;letter-spacing:0.5px">5</i>场比赛</div>
<div style="position:absolute;left:182px;top:698px;width:140px;height:34px;line-height:34px;text-align:left;white-space:nowrap;font-size:12px;color:#333">(比赛编号日期：<i style="font-style:normal;letter-spacing:0.33px">250716</i>)</div>
<div style="position:absolute;left:327px;top:698px;width:40px;height:34px;line-height:34px;text-align:left;white-space:nowrap;font-size:12px;color:#4a85d6">[隐藏]</div>
<div style="position:absolute;left:17px;top:731px;width:1180px;height:1px;background:#c9def0"></div>
<div style="position:absolute;left:18px;top:732px;width:1178px;height:2px;background:#f7f7f7"></div>
<div style="position:absolute;left:85px;top:731px;width:1px;height:3px;background:#c9def0"></div>
<div style="position:absolute;left:185px;top:731px;width:1px;height:3px;background:#c9def0"></div>
<div style="position:absolute;left:452px;top:731px;width:1px;height:3px;background:#c9def0"></div>
<div style="position:absolute;left:832px;top:731px;width:1px;height:3px;background:#c9def0"></div>
<div style="position:absolute;left:944px;top:731px;width:1px;height:3px;background:#c9def0"></div>
<div style="position:absolute;left:1079px;top:731px;width:1px;height:3px;background:#c9def0"></div>
<div style="position:absolute;left:1161px;top:731px;width:1px;height:3px;background:#c9def0"></div>
<div style="position:absolute;left:989px;top:731px;width:1px;height:3px;background:#c9def0"></div>
<div style="position:absolute;left:1033px;top:731px;width:1px;height:3px;background:#c9def0"></div>
<div style="position:absolute;left:453px;top:732px;width:18px;height:2px;background:#ff5a00"></div>
<svg style="position:absolute;left:0;top:0;pointer-events:none" width="1275" height="734" viewBox="0 0 1275 734">
<g fill="#e2185a">
<!-- 青 -->
<polygon points="1096.7,688.1 1106.9,688.1 1103.1,701.5 1092.9,701.5"/>
<polygon points="1084.4,692.8 1117.4,692.8 1116.2,698.3 1082.6,698.3"/>
<polygon points="1071.8,701.4 1126,701.4 1125,705.8 1070.4,705.8"/>
<path d="M1123.5,701.4 Q1130.5,701.4 1129.2,706.5 L1124.6,721 Q1123.8,724.2 1127.5,724.2 L1162.4,724.2 L1161.4,729 L1124.5,729 Q1114.5,729 1116.5,720.5 L1121,705.8 Z"/>
<path d="M1082.5,708.2 L1116,708.2 L1112.8,717.5 Q1111.8,720.3 1108.5,720.3 L1094.5,720.3 Q1091.6,720.3 1092.1,717.4 Q1092.6,714.6 1095.5,714.6 L1106.5,714.6 L1107.6,712.6 L1086.5,712.6 L1080.7,729 L1071.1,729 L1077,711.5 Q1078.2,708.2 1082.5,708.2 Z"/>
<path d="M1127.5,688 Q1132.5,688 1131.8,692.8 Q1131,697 1124.2,698.3 L1123.5,696.3 Q1125.5,695.5 1125.8,694.8 Q1122.5,694.3 1123,691.5 Q1123.6,688 1127.5,688 Z"/>
<!-- 远 -->
<polygon points="1137.6,692.8 1160.8,692.8 1159.6,698.3 1136.3,698.3"/>
<polygon points="1133.2,701.4 1162.2,701.4 1161,705.8 1132,705.8"/>
<path d="M1142,705.8 L1148.2,705.8 Q1145.5,712.5 1142.5,716.5 Q1138.5,721.5 1132.5,721.5 Q1128,721.3 1128.5,718 Q1129.3,714 1134.5,712.2 Q1138,711 1141.5,710.8 L1140.6,713.4 Q1137,713.8 1134.5,715.2 Q1131.6,717 1132.4,718.6 Q1134.5,719.8 1138,716.4 Q1140.6,713 1142,705.8 Z"/>
<path d="M1146.2,708.2 L1152.8,708.2 L1149.6,717.8 Q1149.3,718.6 1150.5,718.4 Q1154.5,717.8 1155.8,713 L1157,708.5 L1162.6,708.5 L1161,714.5 Q1158.5,721.8 1150.8,721.8 Q1142.5,721.8 1143.6,716.5 Z"/>
<!-- 论 -->
<path d="M1176.8,688 Q1181.5,688 1180.9,692.8 Q1180.2,697 1173.6,698.3 L1172.8,696.3 Q1174.8,695.5 1175,694.8 Q1171.8,694.3 1172.3,691.5 Q1172.8,688 1176.8,688 Z"/>
<path d="M1164.5,701.2 L1174.5,701.2 Q1178.5,701.2 1177.4,705.5 L1173.3,719.5 Q1172.6,722.3 1174.8,723.5 L1176.2,724.2 L1175.6,729 Q1163.5,729.5 1165,720 L1168.6,705.8 L1163.4,705.8 Z"/>
<path d="M1179.5,705.8 Q1188.5,704.5 1193.5,695 Q1196.5,690 1202,690.8 Q1205.8,691.4 1206.5,696 Q1207.3,701.2 1212.8,701.2 L1215.6,701.2 L1214.3,705.8 L1209.5,705.8 Q1202,705.8 1201,699.5 Q1200.5,696.5 1198.8,698.5 Q1193.5,705.8 1185,705.8 Z"/>
<path d="M1183,707.8 L1190.4,707.8 L1186.8,720 Q1186,723.8 1189.5,724.2 L1209.5,724.2 L1208.2,729 L1187,729 Q1177,729 1179,720.5 Z"/>
<polygon points="1189.5,716.2 1204.5,716.2 1203.4,720.8 1188.2,720.8"/>
<polygon points="1200.4,707.8 1207,707.8 1204.6,716.5 1198,716.5"/>
<!-- 坛 -->
<path d="M1227.9,688.1 L1237.8,688.1 L1227.6,724.5 L1228.5,724.5 L1227.4,729 L1211.2,729 L1212.4,724.5 L1217.5,724.5 Z"/>
<polygon points="1218,701.2 1269.6,701.2 1268.4,705.8 1216.8,705.8"/>
<polygon points="1239,692.8 1261,692.8 1259.6,698.3 1237.6,698.3"/>
<path fill-rule="evenodd" d="M1233.2,707.8 L1242.9,707.8 L1241.5,713.5 L1253.5,713.5 Q1260,713.5 1258.5,719.5 L1256.3,729 L1238,729 Q1228,729 1230,720.5 Z M1239.5,718 L1249.8,718 Q1251.5,718 1251,719.8 L1250,723.6 L1241,723.6 Q1237.5,723.6 1238.5,720.5 Z"/>
</g>
</svg>
</body></html>
